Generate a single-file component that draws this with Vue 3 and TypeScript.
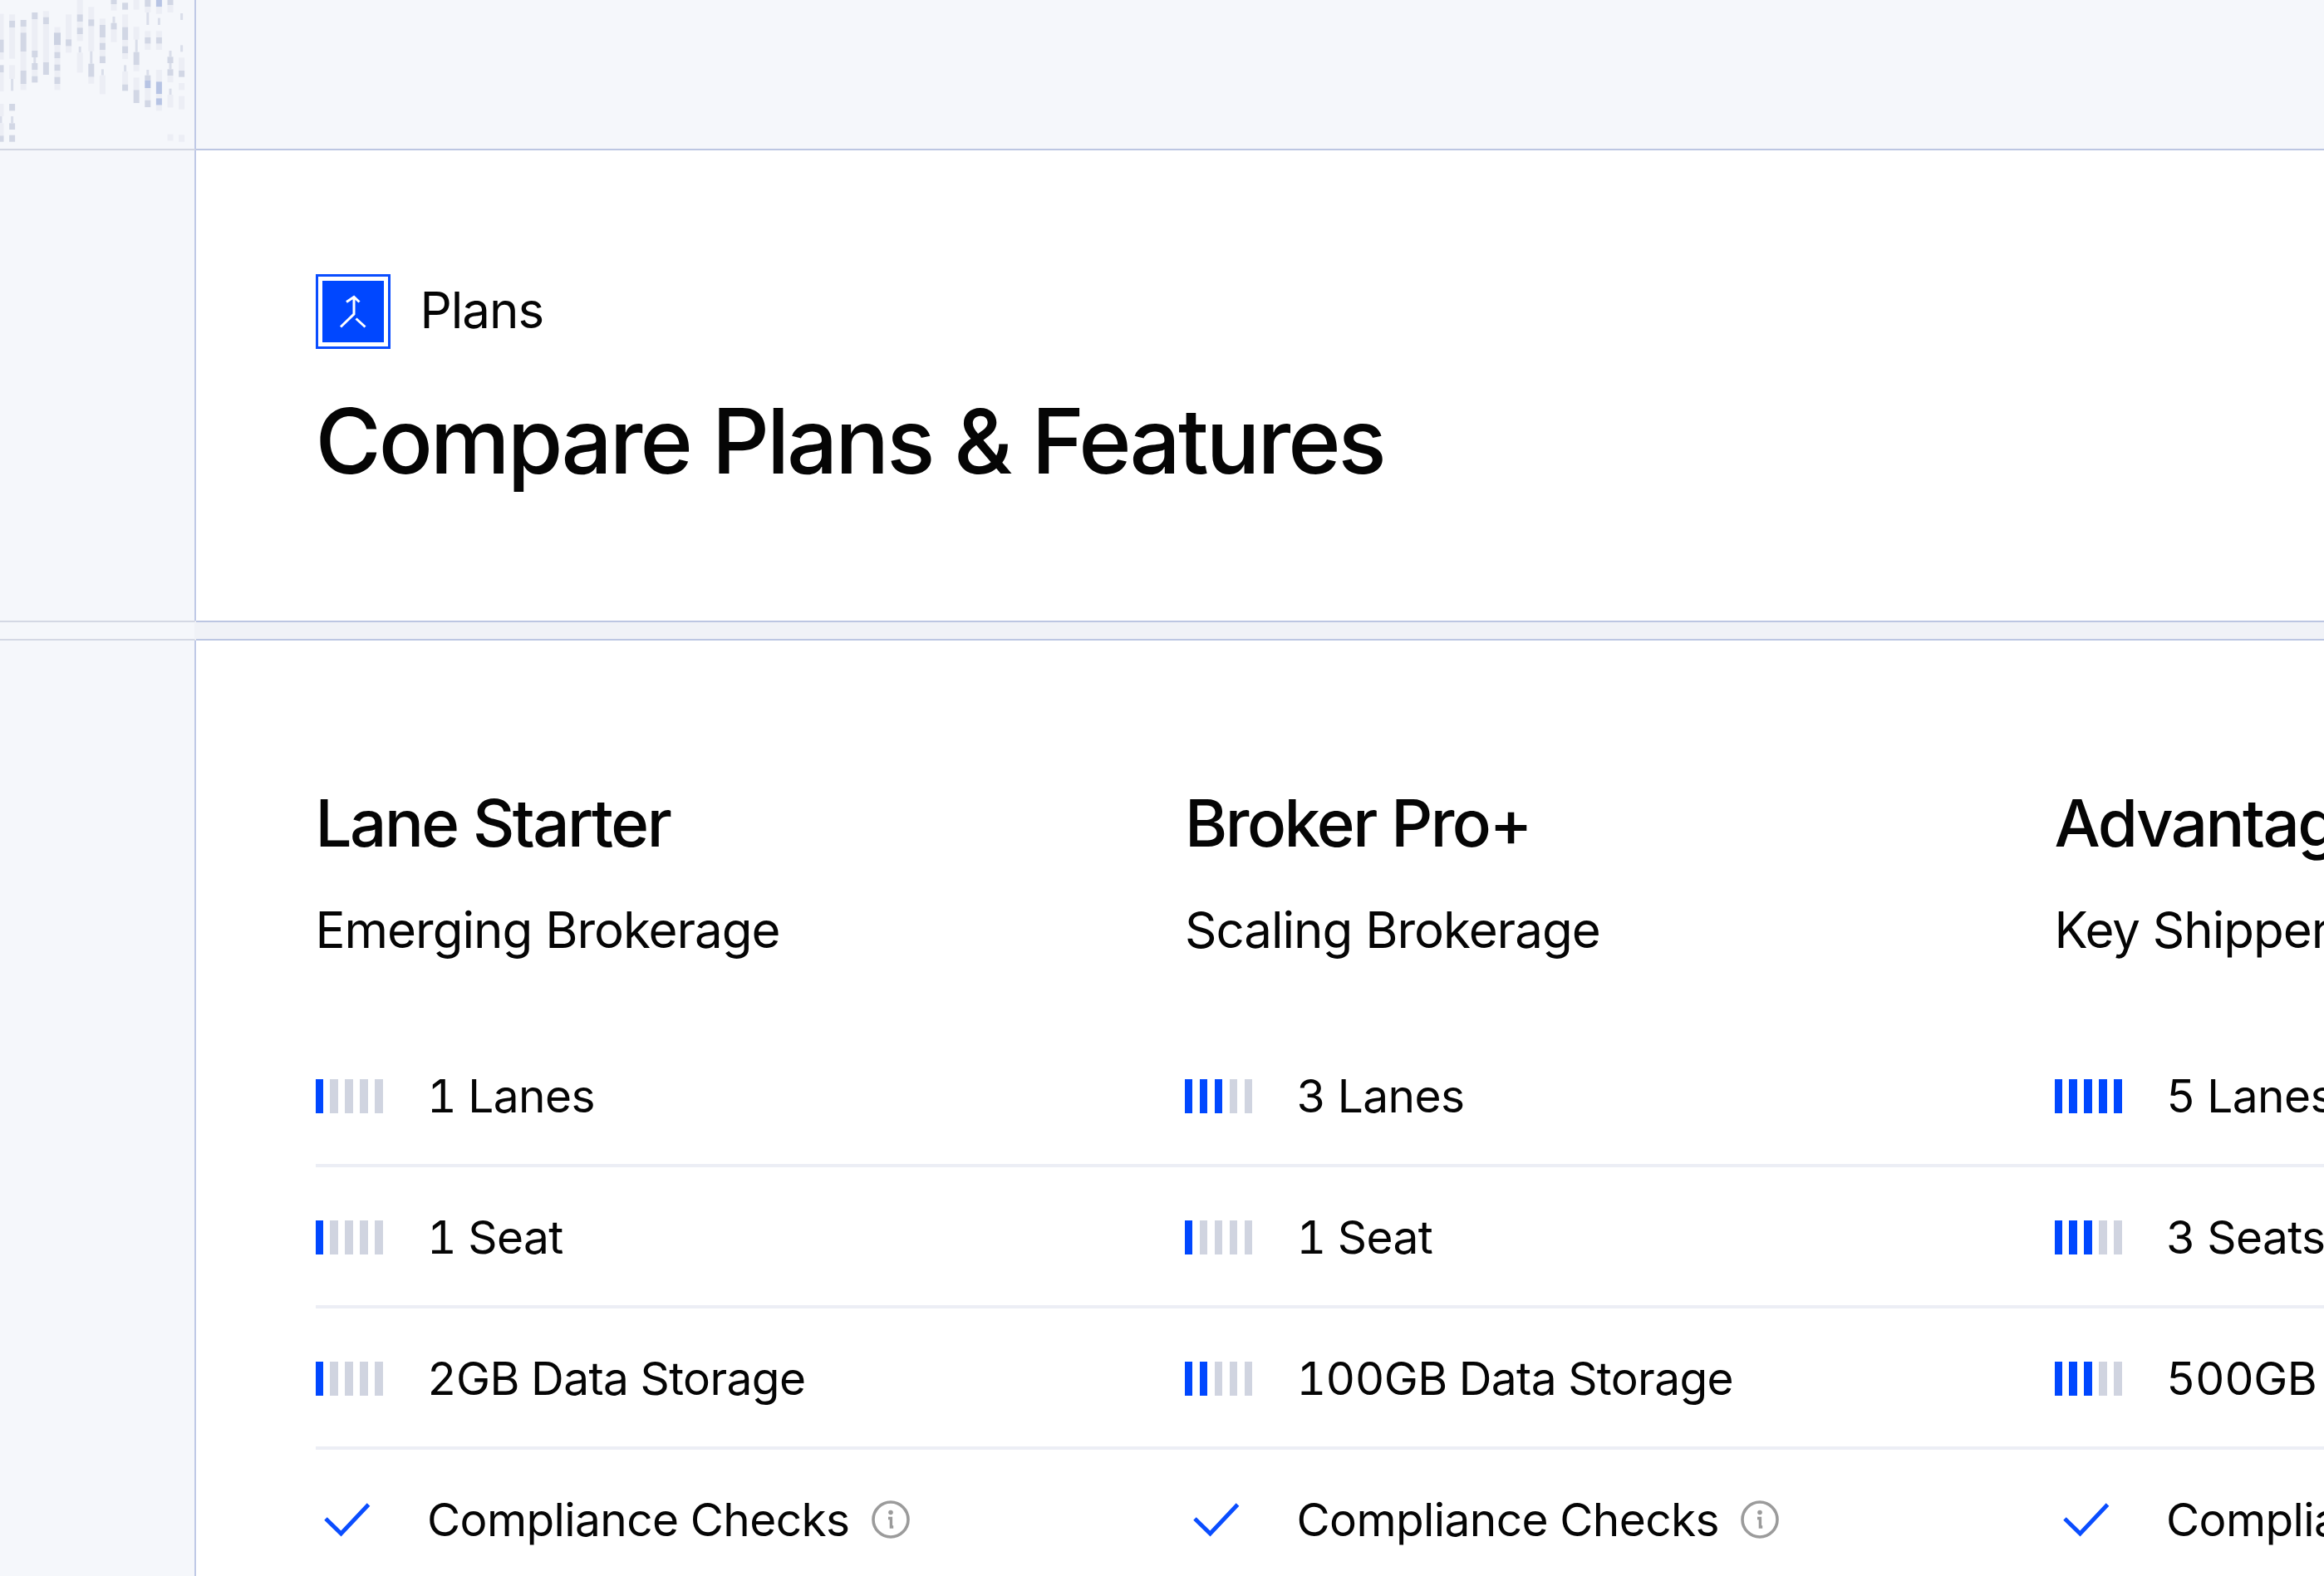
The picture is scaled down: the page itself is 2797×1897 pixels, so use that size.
<script setup lang="ts">
type Tone = 'l' | 'm' | 'd' | 'b' | 't'
type Seg = [number, number, Tone]
const pitch = 13.6
const startX = 1
const columns: Seg[][] = [
  [[50,143,'l'],[143,190,'m'],[190,215,'l'],[235,262,'m'],[262,330,'l'],[375,420,'l'],[420,445,'t'],[445,490,'l'],[490,512,'m']],
  [[52,75,'l'],[75,100,'m'],[100,212,'l'],[235,285,'l'],[285,328,'t'],[375,400,'m'],[420,445,'t'],[445,468,'m'],[488,512,'m']],
  [[72,96,'m'],[96,118,'l'],[118,186,'m'],[186,255,'l'],[255,303,'m'],[303,325,'l']],
  [[45,70,'m'],[70,183,'l'],[183,207,'m'],[207,228,'t'],[228,252,'m'],[252,275,'l'],[275,298,'m']],
  [[40,62,'l'],[62,88,'m'],[88,180,'l'],[180,225,'l'],[225,270,'m']],
  [[98,118,'l'],[118,163,'d'],[163,188,'l'],[188,210,'m'],[210,233,'l'],[233,256,'m'],[256,278,'l'],[278,303,'m'],[303,325,'l']],
  [[52,120,'l'],[120,142,'l'],[142,167,'m'],[167,190,'l']],
  [[0,52,'l'],[52,78,'m'],[78,100,'l'],[100,123,'m'],[123,148,'l'],[168,190,'t'],[190,262,'l']],
  [[25,70,'l'],[70,95,'m'],[95,185,'l'],[185,230,'t'],[230,278,'m'],[278,302,'l']],
  [[67,90,'l'],[90,135,'m'],[135,155,'l'],[155,180,'m'],[180,203,'l'],[203,228,'m'],[250,272,'t'],[272,340,'l']],
  [[0,15,'m'],[15,38,'l'],[60,83,'t'],[83,107,'m'],[107,152,'l']],
  [[10,35,'m'],[52,98,'l'],[98,145,'m'],[145,167,'l'],[167,192,'m'],[192,213,'l'],[235,258,'t'],[258,305,'l'],[305,328,'m']],
  [[0,35,'l'],[97,143,'l'],[143,188,'t'],[188,235,'m'],[235,257,'l'],[280,325,'l'],[325,372,'m']],
  [[0,25,'m'],[25,45,'l'],[45,90,'t'],[112,135,'l'],[135,158,'m'],[158,180,'l'],[252,272,'t'],[272,290,'m'],[290,318,'b'],[318,362,'l'],[362,387,'m']],
  [[0,25,'b'],[25,50,'l'],[65,90,'t'],[112,135,'l'],[135,158,'m'],[158,180,'l'],[252,295,'l'],[295,340,'b'],[340,355,'l'],[355,380,'b'],[380,400,'l']],
  [[0,18,'m'],[18,45,'l'],[183,205,'t'],[205,228,'m'],[228,250,'t'],[250,273,'m'],[273,297,'l'],[320,342,'t'],[342,388,'l'],[485,508,'l']],
  [[48,72,'t'],[163,187,'t'],[208,255,'l'],[255,278,'m'],[300,325,'l'],[347,395,'l'],[487,512,'l']]
]
const toneStyle: Record<Tone, { w: number; fill: string }> = {
  l: { w: 7, fill: '#eceef5' },
  m: { w: 7, fill: '#d2d7e5' },
  d: { w: 8, fill: '#ccd2e2' },
  b: { w: 7, fill: '#b7c4e4' },
  t: { w: 3, fill: '#dadeea' }
}
const rects = columns.flatMap((col, i) =>
  col.map(([a, b, tone]) => ({
    x: startX + i * pitch - toneStyle[tone].w / 2,
    y: a / 3,
    width: toneStyle[tone].w,
    height: (b - a) / 3,
    fill: toneStyle[tone].fill
  }))
)

interface Feature { level?: number; text: string; info?: boolean }
interface Plan { name: string; sub: string; features: Feature[] }
const compliance: Feature = { text: 'Compliance Checks', info: true }
const plans: Plan[] = [
  { name: 'Lane Starter', sub: 'Emerging Brokerage', features: [
    { level: 1, text: '1 Lanes' }, { level: 1, text: '1 Seat' }, { level: 1, text: '2GB Data Storage' }, compliance ] },
  { name: 'Broker Pro+', sub: 'Scaling Brokerage', features: [
    { level: 3, text: '3 Lanes' }, { level: 1, text: '1 Seat' }, { level: 2, text: '100GB Data Storage' }, compliance ] },
  { name: 'Advantage', sub: 'Key Shippers', features: [
    { level: 5, text: '5 Lanes' }, { level: 3, text: '3 Seats' }, { level: 3, text: '500GB Data Storage' }, compliance ] }
]
</script>

<template>
  <div class="page">
    <div class="band top">
      <div class="side">
        <svg class="pattern" width="234" height="179" viewBox="0 0 234 179" aria-hidden="true">
          <rect v-for="(r, i) in rects" :key="i" :x="r.x" :y="r.y" :width="r.width" :height="r.height" :fill="r.fill" />
        </svg>
      </div>
      <div class="main"></div>
    </div>

    <div class="band hero">
      <div class="side"></div>
      <div class="main hero-main">
        <div class="eyebrow">
          <span class="logo">
            <span class="logo-fill">
              <svg width="74" height="74" viewBox="0 0 74 74" fill="none" stroke="#fff" stroke-width="3" aria-hidden="true">
                <path d="M29 25.5 38 19.5 44.5 25.5M38 19.5V40L22 55.5M40.5 45.5 51.5 55.5" />
              </svg>
            </span>
          </span>
          <span class="eyebrow-text">Plans</span>
        </div>
        <h1>Compare Plans &amp; Features</h1>
      </div>
    </div>

    <div class="band gap">
      <div class="side"></div>
      <div class="main"></div>
    </div>

    <div class="band content">
      <div class="side"></div>
      <div class="main content-main">
        <div class="plans">
          <section v-for="plan in plans" :key="plan.name" class="plan">
            <h2>{{ plan.name }}</h2>
            <p class="sub">{{ plan.sub }}</p>
            <ul>
              <li v-for="f in plan.features" :key="f.text">
                <span class="mark">
                  <span v-if="f.level" class="bars">
                    <i v-for="n in 5" :key="n" :class="{ on: n <= (f.level ?? 0) }"></i>
                  </span>
                  <svg v-else width="70" height="42" viewBox="0 0 70 42" fill="none" stroke="#0a4dff" stroke-width="5" aria-hidden="true">
                    <path d="M12 20 30.5 38 63.5 3" />
                  </svg>
                </span>
                <span class="label">{{ f.text }}</span>
                <svg v-if="f.info" class="info" width="46" height="46" viewBox="0 0 46 46" fill="none" aria-hidden="true">
                  <circle cx="23" cy="23" r="21" stroke="#9b9b9b" stroke-width="3.6" />
                  <circle cx="23" cy="14.5" r="2.8" fill="#9b9b9b" />
                  <path d="M20 21.5h3.4V32h2.8" stroke="#9b9b9b" stroke-width="3.4" />
                </svg>
              </li>
            </ul>
          </section>
        </div>
      </div>
    </div>
  </div>
</template>

<style>
html, body { margin: 0; overflow: hidden; background: #f5f7fb; }
</style>

<style scoped>
.page {
  width: 2797px;
  height: 1897px;
  display: flex;
  flex-direction: column;
  overflow: hidden;
  background: #f5f7fb;
  color: #050505;
  font-family: Inter, "Liberation Sans", sans-serif;
}
.band { display: flex; flex: none; }
.side {
  flex: none;
  width: 234px;
  border-right: 2px solid #bfc9e6;
  position: relative;
}
.main { flex: 1; min-width: 0; }
.top { height: 181px; }
.top .side { border-bottom: 2px solid #d2d6e2; }
.top .main { border-bottom: 2px solid #bcc6e2; }
.pattern { display: block; }
.hero { height: 566px; }
.hero-main { background: #fff; padding: 149px 0 0 143.5px; box-sizing: border-box; }
.eyebrow { display: flex; align-items: center; gap: 36px; }
.logo {
  box-sizing: border-box;
  width: 90px;
  height: 90px;
  border: 3px solid #0a4dff;
  padding: 5px;
  display: block;
}
.logo-fill { display: block; width: 100%; height: 100%; background: #0047ff; }
.logo-fill svg { display: block; }
.eyebrow-text { font-size: 60px; line-height: 86px; padding-bottom: 4px; letter-spacing: -1px; }
h1 {
  margin: 49px 0 0;
  font-size: 108px;
  line-height: 124px;
  font-weight: 500;
  letter-spacing: -3.04px;
}
.gap { height: 24px; }
.gap .side { border-top: 2px solid #d4d8e4; border-bottom: 2px solid #d4d8e4; border-right-color: #f0f2f7; box-sizing: content-box; height: 20px; }
.gap .main { background: #f0f2f7; border-top: 2px solid #bcc6e2; border-bottom: 2px solid #bcc6e2; box-sizing: border-box; }
.content { flex: 1; }
.content-main { background: #fff; overflow: hidden; padding: 0 0 0 143.5px; }
.plans { display: flex; }
.plan { flex: none; width: 1046.5px; }
h2 {
  margin: 0;
  padding-top: 170px;
  font-size: 78px;
  line-height: 100px;
  font-weight: 500;
  letter-spacing: -2.5px;
  white-space: nowrap;
}
.sub { margin: 38px 0 0; font-size: 60px; line-height: 80px; letter-spacing: -1px; white-space: nowrap; }
ul { list-style: none; margin: 0; padding: 0; margin-top: 75.5px; }
li {
  height: 170px;
  box-sizing: border-box;
  display: flex;
  align-items: center;
  padding-top: 3px;
  border-bottom: 4px solid #eceef5;
  font-size: 55px;
}
li:last-child { border-bottom-color: transparent; }
.mark { flex: none; width: 134.5px; display: flex; }
.bars { display: flex; gap: 8.6px; }
.bars i { display: block; width: 9.4px; height: 41px; background: #d0d4e0; }
.bars i.on { background: #0047ff; }
.label { white-space: nowrap; letter-spacing: -0.6px; font-variant-numeric: tabular-nums; }
.info { margin-left: 26px; flex: none; }
</style>
